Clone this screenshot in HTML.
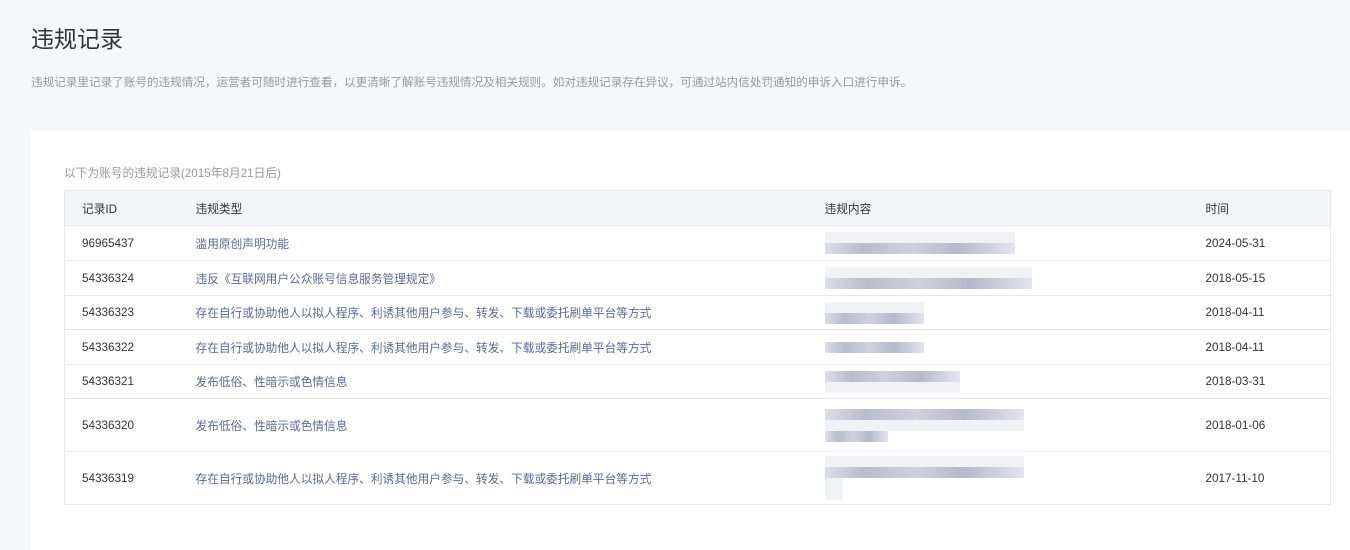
<!DOCTYPE html>
<html><head><meta charset="utf-8"><style>
body{margin:0;width:1350px;height:546px;background:#f6f7f9;font-family:"Liberation Sans","Noto Sans CJK SC",sans-serif;overflow:hidden;position:relative}
h1{position:absolute;left:31px;top:20px;margin:0;font-size:23px;font-weight:normal;color:#333}
.desc{position:absolute;left:31px;top:74px;font-size:11.6px;color:#999}
.card{position:absolute;left:31px;top:130px;width:1319px;height:420px;background:#fff}
.cap{position:absolute;left:64px;top:164px;font-size:11.7px;color:#999}
table{position:absolute;left:64px;top:190px;width:1267px;table-layout:fixed;border-collapse:collapse;font-size:11.7px;color:#333;border:1px solid #e5e7eb}
th{background:#f3f4f7;font-weight:normal;text-align:left;height:34px;padding:0}
td{border-top:1px solid #e5e7eb;padding:0;vertical-align:middle}
th:first-child,td:first-child{padding-left:17px}
a{color:#576b95;text-decoration:none}
.bl{display:block;height:11px;background:linear-gradient(90deg,#dcdde6,#b8bccc 20%,#cfd1dc 45%,#b5b9cb 70%,#e3e4ec);margin:0}
.lt{display:block;height:11px;background:#f1f2f5}
</style></head><body>
<h1>违规记录</h1>
<div class="desc">违规记录里记录了账号的违规情况，运营者可随时进行查看，以更清晰了解账号违规情况及相关规则。如对违规记录存在异议，可通过站内信处罚通知的申诉入口进行申诉。</div>
<div class="card"></div>
<div class="cap">以下为账号的违规记录(2015年8月21日后)</div>
<table>
<colgroup><col style="width:131px"><col style="width:629px"><col style="width:381px"><col></colgroup>
<tr><th>记录ID</th><th>违规类型</th><th>违规内容</th><th>时间</th></tr>
<tr style="height:35px"><td>96965437</td><td><a>滥用原创声明功能</a></td><td><span class="lt" style="width:190px"></span><span class="bl" style="width:190px"></span></td><td>2024-05-31</td></tr>
<tr style="height:35px"><td>54336324</td><td><a>违反《互联网用户公众账号信息服务管理规定》</a></td><td><span class="lt" style="width:207px"></span><span class="bl" style="width:207px"></span></td><td>2018-05-15</td></tr>
<tr style="height:34px"><td>54336323</td><td><a>存在自行或协助他人以拟人程序、利诱其他用户参与、转发、下载或委托刷单平台等方式</a></td><td><span class="lt" style="width:99px"></span><span class="bl" style="width:99px"></span></td><td>2018-04-11</td></tr>
<tr style="height:35px"><td>54336322</td><td><a>存在自行或协助他人以拟人程序、利诱其他用户参与、转发、下载或委托刷单平台等方式</a></td><td><span class="bl" style="width:99px"></span></td><td>2018-04-11</td></tr>
<tr style="height:34px"><td>54336321</td><td><a>发布低俗、性暗示或色情信息</a></td><td><span class="bl" style="width:135px"></span><span class="lt" style="width:135px"></span></td><td>2018-03-31</td></tr>
<tr style="height:53px"><td>54336320</td><td><a>发布低俗、性暗示或色情信息</a></td><td><span class="bl" style="width:199px"></span><span class="lt" style="width:199px"></span><span class="bl" style="width:63px"></span></td><td>2018-01-06</td></tr>
<tr style="height:53px"><td>54336319</td><td><a>存在自行或协助他人以拟人程序、利诱其他用户参与、转发、下载或委托刷单平台等方式</a></td><td><span class="lt" style="width:199px"></span><span class="bl" style="width:199px"></span><span class="lt" style="width:18px;height:22px"></span></td><td>2017-11-10</td></tr>
</table>
</body></html>
